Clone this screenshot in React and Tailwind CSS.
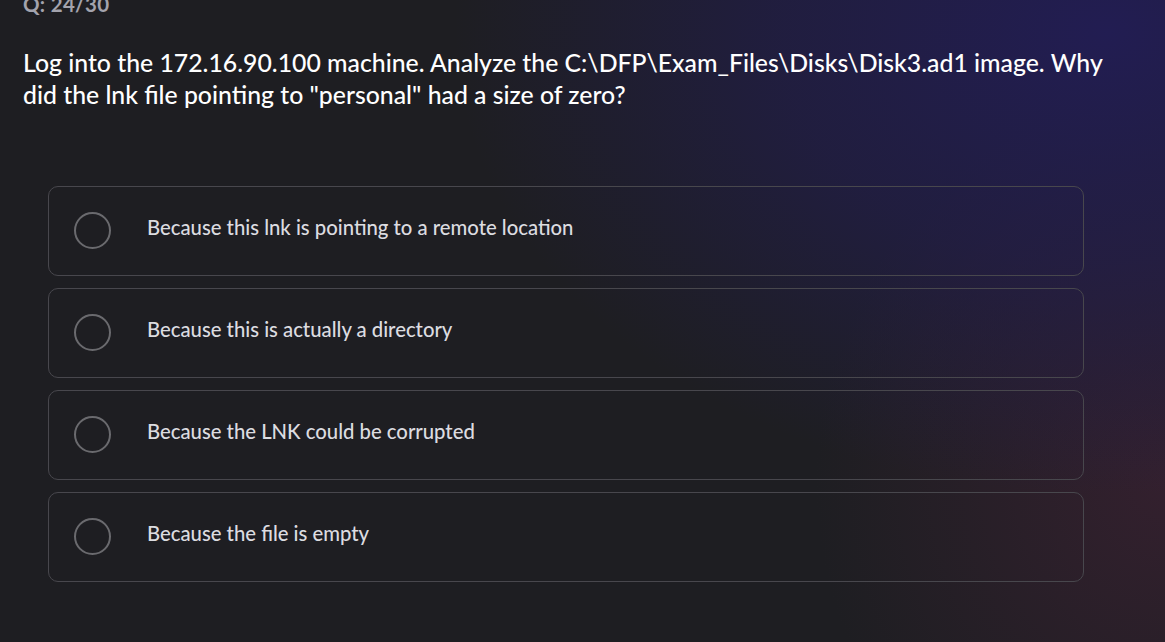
import React from 'react';

const options = [
  'Because this lnk is pointing to a remote location',
  'Because this is actually a directory',
  'Because the LNK could be corrupted',
  'Because the file is empty',
];

const Option = ({ label }) => (
  <div className="flex items-center h-[90px] rounded-[10px] border border-[#48474d] pl-[25px]">
    <div className="w-[37px] h-[37px] rounded-full border-[2.5px] border-[#6a6a6e] flex-shrink-0" />
    <span className="ml-[36px] -mt-[8px] text-[20.3px] font-medium text-[#dcdce0]">{label}</span>
  </div>
);

export default function App() {
  return (
    <div
      className="w-[1165px] h-[642px] overflow-hidden bg-[#1e1e22] bg-[radial-gradient(ellipse_70%_90%_at_95%_5%,#221d52_0%,rgba(34,29,82,0.6)_40%,rgba(30,30,34,0)_80%),radial-gradient(ellipse_30%_60%_at_100%_75%,#33202e_0%,rgba(51,32,46,0)_100%)]"
      style={{ fontFamily: 'Lato, "Noto Sans", sans-serif' }}
    >
      <div className="px-[23px]">
        <div className="-mt-[11px] text-[20.5px] font-bold tracking-[0.3px] text-[#a3a3ad]">Q: 24/30</div>
        <h1 className="mt-[27px] max-w-[1095px] text-[24.8px] leading-[32px] font-medium text-white">
          Log into the 172.16.90.100 machine. Analyze the C:\DFP\Exam_Files\Disks\Disk3.ad1 image. Why did the lnk file pointing to "personal" had a size of zero?
        </h1>
      </div>
      <div className="mt-[75px] ml-[48px] w-[1036px] flex flex-col gap-[12px]">
        {options.map((o) => (
          <Option key={o} label={o} />
        ))}
      </div>
    </div>
  );
}
